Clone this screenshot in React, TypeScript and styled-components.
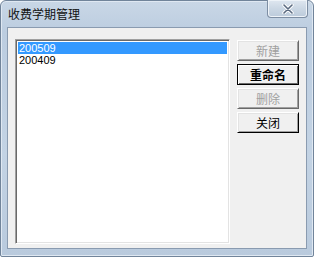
import React from "react";
import styled, { createGlobalStyle } from "styled-components";

const Global = createGlobalStyle`
  html, body { margin: 0; padding: 0; background: #ffffff; }
  body { font-family: "Liberation Sans", "Noto Sans CJK SC", sans-serif; font-size: 12px; }
`;

const Window = styled.div`
  box-sizing: border-box;
  width: 314px;
  height: 257px;
  display: flex;
  flex-direction: column;
  background: linear-gradient(180deg, #c9d7e6 0%, #bccde0 12%, #c3d3e4 60%, #b9cadd 100%);
  border: 1px solid #71849a;
  border-radius: 6px 6px 2px 2px;
  box-shadow: inset 0 0 0 1px #dfe8f2;
`;

const TitleBar = styled.div`
  height: 26px;
  display: flex;
  align-items: flex-start;
  justify-content: space-between;
  padding-left: 7px;
`;

const Title = styled.div`
  margin-top: 6px;
  font-family: "Noto Sans CJK SC", sans-serif;
  font-size: 12px;
  line-height: 14px;
  color: #111111;
`;

const CloseButton = styled.div`
  box-sizing: border-box;
  width: 41px;
  height: 18px;
  margin-right: 5px;
  margin-top: -1px;
  border: 1px solid #7d8ea3;
  border-top: none;
  border-radius: 0 0 4px 4px;
  background: linear-gradient(180deg, #dfe7f0 0%, #cbd7e4 50%, #bccbdb 100%);
  box-shadow: inset 0 0 0 1px #eef3f8;
  display: flex;
  align-items: center;
  justify-content: center;
`;

const Client = styled.div`
  box-sizing: border-box;
  flex: 1;
  margin: 0 6px 7px 6px;
  background: #f0f0f0;
  border: 1px solid #8a9bb0;
  display: flex;
  align-items: flex-start;
  padding: 11px 5px 3px 7px;
  gap: 7px;
`;

const ListBox = styled.div`
  box-sizing: border-box;
  width: 215px;
  height: 205px;
  background: #ffffff;
  border-top: 1px solid #a0a0a0;
  border-left: 1px solid #a0a0a0;
  border-right: 1px solid #ffffff;
  border-bottom: 1px solid #ffffff;
  box-shadow: inset 1px 1px 0 #696969, inset -1px -1px 0 #e3e3e3;
  padding: 2px 2px;
`;

const ListItem = styled.div<{ $selected?: boolean }>`
  height: 12px;
  line-height: 12px;
  padding-left: 1px;
  font-family: "Liberation Sans", sans-serif;
  font-size: 11px;
  color: ${(p) => (p.$selected ? "#ffffff" : "#000000")};
  background: ${(p) => (p.$selected ? "#3399ff" : "transparent")};
`;

const ButtonColumn = styled.div`
  display: flex;
  flex-direction: column;
  gap: 3px;
  margin-top: 1px;
`;

const Button = styled.div<{ $disabled?: boolean; $default?: boolean }>`
  box-sizing: border-box;
  width: 62px;
  height: 21px;
  display: flex;
  align-items: center;
  justify-content: center;
  font-family: "Noto Sans CJK SC", sans-serif;
  font-size: 12px;
  color: ${(p) => (p.$disabled ? "#a0a0a0" : "#000000")};
  font-weight: ${(p) => (p.$default ? 700 : 400)};
  background: #f0f0f0;
  border-top: 1px solid ${(p) => (p.$default ? "#000000" : "#ffffff")};
  border-left: 1px solid ${(p) => (p.$default ? "#000000" : "#ffffff")};
  border-right: 1px solid ${(p) => (p.$disabled ? "#696969" : "#000000")};
  border-bottom: 1px solid ${(p) => (p.$disabled ? "#696969" : "#000000")};
  box-shadow: ${(p) =>
    p.$default
      ? "inset 1px 1px 0 #ffffff, inset -1px -1px 0 #696969"
      : "inset 1px 1px 0 #e3e3e3, inset -1px -1px 0 #a0a0a0"};
`;

export default function App() {
  return (
    <>
      <Global />
      <Window>
        <TitleBar>
          <Title>收费学期管理</Title>
          <CloseButton>
            <svg width="12" height="10" viewBox="0 0 12 10">
              <path d="M2 1 L10 9 M10 1 L2 9" stroke="#ffffff" strokeWidth="3.4" strokeLinecap="round" />
              <path d="M2 1 L10 9 M10 1 L2 9" stroke="#5a6a80" strokeWidth="1.6" strokeLinecap="round" />
            </svg>
          </CloseButton>
        </TitleBar>
        <Client>
          <ListBox>
            <ListItem $selected>200509</ListItem>
            <ListItem>200409</ListItem>
          </ListBox>
          <ButtonColumn>
            <Button $disabled>新建</Button>
            <Button $default>重命名</Button>
            <Button $disabled>删除</Button>
            <Button>关闭</Button>
          </ButtonColumn>
        </Client>
      </Window>
    </>
  );
}
